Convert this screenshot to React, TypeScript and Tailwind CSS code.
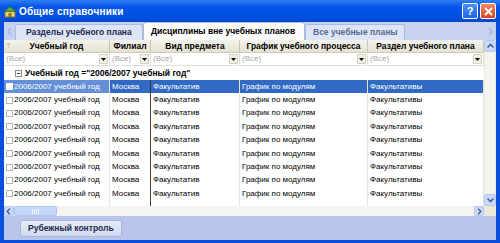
import { ReactNode } from 'react'

const FONT = { fontFamily: '"Liberation Sans", Arial, sans-serif' }

// ширины колонок, px
const COLS = [106, 41, 89, 128, 116]
const HEADERS = ['Учебный год', 'Филиал', 'Вид предмета', 'График учебного процесса', 'Раздел учебного плана']
const ROW = ['2006/2007 учебный год', 'Москва', 'Факультатив', 'График по модулям', 'Факультативы']
const ROW_COUNT = 9

function DropButton() {
  return (
    <div className="w-[9px] h-[10px] flex items-center justify-center bg-[#f1efe6] border border-[#d6d3c6]">
      <svg width="5" height="3" viewBox="0 0 5 3">
        <path d="M0 0h5L2.5 3z" fill="#000" />
      </svg>
    </div>
  )
}

function ScrollArrow({ dir }: { dir: 'up' | 'down' | 'left' | 'right' }) {
  const d = {
    up: 'M1.5 5.5L4.5 2.5L7.5 5.5',
    down: 'M1.5 2.5L4.5 5.5L7.5 2.5',
    left: 'M5.5 1.5L2.5 4.5L5.5 7.5',
    right: 'M3.5 1.5L6.5 4.5L3.5 7.5',
  }[dir]
  return (
    <div className="w-full h-full flex items-center justify-center bg-[#c9d8fb] border border-[#b4c8f6] rounded-[2px]">
      <svg width="9" height="9" viewBox="0 0 9 9">
        <path d={d} stroke="#4d6185" strokeWidth="1.6" fill="none" />
      </svg>
    </div>
  )
}

function Cell({ w, children, className = '' }: { w: number; children?: ReactNode; className?: string }) {
  return (
    <div className={`shrink-0 h-full flex items-center overflow-hidden whitespace-nowrap ${className}`} style={{ width: w }}>
      {children}
    </div>
  )
}

export default function App() {
  return (
    <div className="w-[500px] h-[243px] flex flex-col bg-[#0a4fdc] overflow-hidden" style={FONT}>
      {/* заголовок окна */}
      <div className="h-[22px] shrink-0 flex items-center px-[4px] bg-[linear-gradient(#2f7ff3,#0656e6_30%,#0050df_80%,#0a47c8)]">
        <svg width="12" height="13" viewBox="0 0 12 13" className="mr-[3px]">
          <rect x="1" y="6" width="10" height="6" fill="#e9d36a" stroke="#8b7a2a" strokeWidth="0.8" />
          <path d="M0.5 6.5L6 1.5L11.5 6.5z" fill="#5aa845" stroke="#2f6b24" strokeWidth="0.8" />
          <rect x="4.5" y="8" width="3" height="4" fill="#a56a2a" />
        </svg>
        <span className="text-white font-bold text-[10px] tracking-[0.2px]">Общие справочники</span>
        <div className="ml-auto flex gap-[2px]">
          <div className="w-[16px] h-[16px] rounded-[2px] border border-white bg-[linear-gradient(#4d8df7,#2462e3)] flex items-center justify-center text-white font-bold text-[11px] leading-none">?</div>
          <div className="w-[16px] h-[16px] rounded-[2px] border border-white bg-[linear-gradient(#ef8762,#d9461f)] flex items-center justify-center">
            <svg width="9" height="9" viewBox="0 0 9 9">
              <path d="M1 1L8 8M8 1L1 8" stroke="#fff" strokeWidth="1.8" />
            </svg>
          </div>
        </div>
      </div>

      <div className="flex-1 flex flex-col mx-[4px] mb-[3px] bg-[#b9c6ec] min-h-0">
        {/* вкладки */}
        <div className="h-[18px] shrink-0 flex items-end bg-[#c6d2f0]">
          <div className="w-[11px] h-full flex items-center justify-center">
            <svg width="5" height="9" viewBox="0 0 5 9">
              <path d="M4 1L1 4.5L4 8" stroke="#a9b8de" strokeWidth="1.6" fill="none" />
            </svg>
          </div>
          <div className="h-[16px] w-[128px] flex items-center pl-[10px] bg-[#dde4f6] border border-b-0 border-[#aebbe0] rounded-t-[3px] text-[8.5px] font-bold text-[#1c2a4a]">
            Разделы учебного плана
          </div>
          <div className="h-[18px] w-[162px] flex items-center pl-[7px] bg-[#fcfcfb] border border-b-0 border-[#aebbe0] rounded-t-[3px] text-[8.5px] font-bold text-black">
            Дисциплины вне учебных планов
          </div>
          <div className="h-[16px] w-[100px] flex items-center pl-[7px] bg-[#dde4f6] border border-b-0 border-[#aebbe0] rounded-t-[3px] text-[8.5px] font-bold text-[#5a6b95]">
            Все учебные планы
          </div>
          <div className="ml-auto w-[12px] h-full flex items-center justify-center">
            <svg width="5" height="9" viewBox="0 0 5 9">
              <path d="M1 1L4 4.5L1 8" stroke="#a9b8de" strokeWidth="1.6" fill="none" />
            </svg>
          </div>
        </div>

        {/* таблица */}
        <div className="h-[176px] shrink-0 flex bg-white">
          <div className="w-[480px] flex flex-col">
            {/* шапка */}
            <div className="h-[13px] shrink-0 flex bg-[linear-gradient(#f4f3ec,#e6e3d3)] border-b border-[#cfcbb8] text-[8.5px] font-bold text-black">
              {COLS.map((w, i) => (
                <Cell key={i} w={w} className="justify-center border-r border-[#cbc7b3] relative">
                  {i === 0 && (
                    <svg width="5" height="6" viewBox="0 0 5 6" className="absolute left-[2px] top-[3px]">
                      <path d="M0 0h5L3 3v3L2 5V3z" fill="#d8cf9a" />
                    </svg>
                  )}
                  {HEADERS[i]}
                </Cell>
              ))}
            </div>
            {/* фильтр */}
            <div className="h-[13px] shrink-0 flex border-b border-[#e2e0d8] text-[8px] text-[#a7a7a7]">
              {COLS.map((w, i) => (
                <Cell key={i} w={w} className="justify-between pl-[2px] pr-[1px] border-r border-[#e2e0d8]">
                  <span>(Все)</span>
                  <DropButton />
                </Cell>
              ))}
            </div>
            {/* группа */}
            <div className="h-[14px] shrink-0 flex items-center pl-[11px] gap-[3px] text-[8.5px] font-bold text-black">
              <div className="w-[7px] h-[7px] border border-[#8c8c8c] flex items-center justify-center">
                <div className="w-[3px] h-px bg-[#333]" />
              </div>
              <span>Учебный год ="2006/2007 учебный год"</span>
            </div>
            {/* строки */}
            <div className="flex-1 min-h-0 overflow-hidden text-[8px]">
              {Array.from({ length: ROW_COUNT }).map((_, r) => {
                const sel = r === 0
                return (
                  <div key={r} className={`h-[13.4px] flex ${sel ? 'bg-[#316ac5] text-white' : 'text-black'}`}>
                    {COLS.map((w, i) => (
                      <Cell
                        key={i}
                        w={w}
                        className={`pl-[2px] ${i === 1 ? 'border-r border-[#3a3a3a]' : 'border-r border-[#e4e4e4]'} ${
                          sel && i === 0 ? 'bg-[#6590d8]' : ''
                        }`}
                      >
                        {i === 0 && (
                          <div className={`w-[7px] h-[7px] mr-[1px] shrink-0 border ${sel ? 'border-white bg-white' : 'border-[#b5b5b5] bg-white'}`} />
                        )}
                        {ROW[i]}
                      </Cell>
                    ))}
                  </div>
                )
              })}
              {/* край следующей строки */}
              <div className="h-[5px] flex">
                {COLS.map((w, i) => (
                  <Cell key={i} w={w} className={i === 1 ? 'border-r border-[#3a3a3a]' : 'border-r border-[#e4e4e4]'} />
                ))}
              </div>
            </div>
            {/* горизонтальная прокрутка */}
            <div className="h-[10px] shrink-0 flex bg-[#f5f4ef]">
              <div className="w-[10px] h-full">
                <ScrollArrow dir="left" />
              </div>
              <div className="w-[43px] h-full bg-[#c5d6fb] border border-[#b0c5f2] rounded-[2px] flex items-center justify-center gap-[1px]">
                <div className="w-px h-[5px] bg-[#eef3fe]" />
                <div className="w-px h-[5px] bg-[#eef3fe]" />
                <div className="w-px h-[5px] bg-[#eef3fe]" />
                <div className="w-px h-[5px] bg-[#eef3fe]" />
              </div>
              <div className="ml-auto w-[10px] h-full">
                <ScrollArrow dir="right" />
              </div>
            </div>
          </div>
          {/* вертикальная прокрутка */}
          <div className="w-[12px] flex flex-col bg-[#f5f4ef]">
            <div className="h-[12px] shrink-0">
              <ScrollArrow dir="up" />
            </div>
            <div className="flex-1 border-x border-[#eceae2]" />
            <div className="h-[12px] shrink-0">
              <ScrollArrow dir="down" />
            </div>
            <div className="h-[10px] shrink-0 bg-[#ece9d8]" />
          </div>
        </div>

        {/* нижняя панель */}
        <div className="flex-1 flex items-center px-[16px]">
          <div className="h-[17px] px-[7px] flex items-center rounded-[3px] bg-[linear-gradient(#e6ebf9,#d2dbf3)] border border-[#a9b7df] text-[8.5px] font-bold text-[#1c2a4a]">
            Рубежный контроль
          </div>
        </div>
      </div>
    </div>
  )
}
